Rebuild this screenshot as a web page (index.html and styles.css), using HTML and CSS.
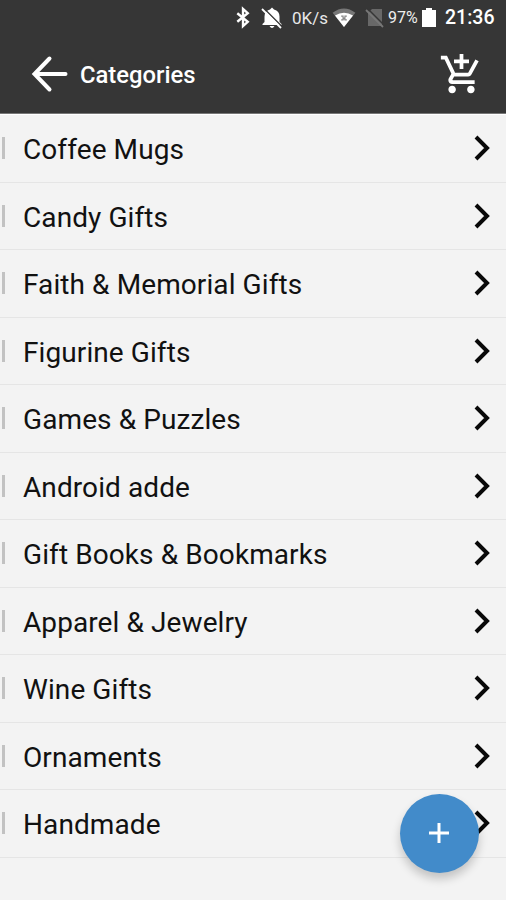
FILE: index.html
```html
<!DOCTYPE html>
<html lang="en">
<head>
<meta charset="utf-8">
<title>Categories</title>
<link rel="stylesheet" href="styles.css">
</head>
<body>
<header class="header">
  <div class="status">
    <svg class="bluetooth" viewBox="0 0 14 20"><path d="M1 5.5 12 14.5 7 19V1l5 4.5L1 14.5"/></svg>
    <svg class="bell" viewBox="0 0 22 22"><path d="M11 0.500L13 2.500Q18.500 4 18.500 9.500V15L20.500 17V18H1.500V17L3.500 15V9.500Q3.500 4 9 2.500zM8.500 19h5q-2.500 4-5 0z"/><path class="cut" d="M3 1.500 21.500 20"/><path class="slash" d="M1 2 20 21"/></svg>
    <span class="speed">0K/s</span>
    <svg class="wifi" viewBox="0 0 24 20"><path class="dim" d="M12 20 0 5Q12-4 24 5z"/><path d="M12 20 2.500 8Q12 2 21.500 8z"/><path class="mark" d="M9 8.500h2v2h2v-2h2M9 12.500h2v-1h2v1h2"/></svg>
    <svg class="sim" viewBox="0 0 20 20"><path d="M7 1h10v17H3V5z"/><path class="cut" d="M2.500 .5 20 18"/><path class="slash" d="M1 2 18 19"/></svg>
    <span class="percent">97%</span>
    <svg class="battery" viewBox="0 0 14 19"><path d="M0 2h4V0h6v2h4v17H0z"/></svg>
    <span class="clock">21:36</span>
  </div>
  <div class="toolbar">
    <svg class="back" viewBox="0 0 36 36"><path d="M18.500 2.500 3.500 18l15 15.500M4 18h30.500"/></svg>
    <h1 class="title">Categories</h1>
    <svg class="cart" viewBox="0 0 24 24"><path d="M11 9h2V6h3V4h-3V1h-2v3H8v2h3v3zm-4 9c-1.100 0-1.990.9-1.990 2S5.900 22 7 22s2-.9 2-2-.9-2-2-2zm10 0c-1.100 0-1.990.9-1.990 2s.89 2 1.990 2 2-.9 2-2-.9-2-2-2zm-9.830-3.250l.03-.12.9-1.630h7.450c.75 0 1.410-.41 1.750-1.030l3.860-7.010L19.420 4h-.01l-1.100 2-2.760 5H8.530l-.13-.27L6.160 6l-.95-2-.94-2H1v2h2l3.600 7.590-1.350 2.450c-.16.28-.25.61-.25.96 0 1.100.9 2 2 2h12v-2H7.420c-.13 0-.25-.11-.25-.25z"/></svg>
  </div>
</header>
<main class="list">
  <div class="row"><span class="label">Coffee Mugs</span><svg class="chevron" viewBox="0 0 16 26"><path d="m2 2 11 11L2 24"/></svg></div>
  <div class="row"><span class="label">Candy Gifts</span><svg class="chevron" viewBox="0 0 16 26"><path d="m2 2 11 11L2 24"/></svg></div>
  <div class="row"><span class="label">Faith &amp; Memorial Gifts</span><svg class="chevron" viewBox="0 0 16 26"><path d="m2 2 11 11L2 24"/></svg></div>
  <div class="row"><span class="label">Figurine Gifts</span><svg class="chevron" viewBox="0 0 16 26"><path d="m2 2 11 11L2 24"/></svg></div>
  <div class="row"><span class="label">Games &amp; Puzzles</span><svg class="chevron" viewBox="0 0 16 26"><path d="m2 2 11 11L2 24"/></svg></div>
  <div class="row"><span class="label">Android adde</span><svg class="chevron" viewBox="0 0 16 26"><path d="m2 2 11 11L2 24"/></svg></div>
  <div class="row"><span class="label">Gift Books &amp; Bookmarks</span><svg class="chevron" viewBox="0 0 16 26"><path d="m2 2 11 11L2 24"/></svg></div>
  <div class="row"><span class="label">Apparel &amp; Jewelry</span><svg class="chevron" viewBox="0 0 16 26"><path d="m2 2 11 11L2 24"/></svg></div>
  <div class="row"><span class="label">Wine Gifts</span><svg class="chevron" viewBox="0 0 16 26"><path d="m2 2 11 11L2 24"/></svg></div>
  <div class="row"><span class="label">Ornaments</span><svg class="chevron" viewBox="0 0 16 26"><path d="m2 2 11 11L2 24"/></svg></div>
  <div class="row"><span class="label">Handmade</span><svg class="chevron" viewBox="0 0 16 26"><path d="m2 2 11 11L2 24"/></svg></div>
</main>
<button class="fab" aria-label="Add"><svg viewBox="0 0 20 20"><path d="M10 0v20M0 10h20"/></svg></button>
</body>
</html>
```
FILE: styles.css
```css
* { box-sizing: border-box; }
body {
  margin: 0;
  height: 900px;
  overflow: hidden;
  position: relative;
  background: #f3f3f3;
  color: #111;
  font-family: Roboto, "Liberation Sans", sans-serif;
}
svg { display: block; flex: none; overflow: visible; }
.header {
  height: 114px;
  background: #363636;
  border-bottom: 1px solid #777;
  color: #fff;
}
.status {
  height: 35px;
  display: flex;
  align-items: center;
  justify-content: flex-end;
  padding-right: 10px;
  white-space: nowrap;
}
.status svg { fill: #fff; }
.status .bluetooth { width: 14px; height: 19px; fill: none; stroke: #fff; stroke-width: 2.5; margin-right: 11px; }
.bell { width: 22px; height: 22px; margin-right: 9px; }
.cut { stroke: #363636; stroke-width: 1.5; }
.slash { stroke: #fff; stroke-width: 1.8; }
.speed { width: 36px; font-size: 17px; color: #e8e8e8; margin-right: 4px; }
.wifi { width: 24px; height: 19px; margin-right: 9px; }
.status .dim { fill: #777; }
.mark { fill: none; stroke: #888; stroke-width: 1.2; }
.status .sim { width: 20px; height: 20px; fill: #686868; margin-right: 3px; }
.sim .slash { stroke: #777; }
.percent { width: 31px; font-size: 16px; color: #eee; margin-right: 3px; }
.battery { width: 14px; height: 19px; margin-right: 9px; }
.clock { width: 51px; font-size: 19.5px; font-weight: 500; }
.toolbar {
  height: 78px;
  display: flex;
  align-items: center;
  padding: 0 22px 0 31px;
}
.back { width: 36px; height: 36px; fill: none; stroke: #fff; stroke-width: 4; stroke-linecap: round; }
.title { margin: 1px 0 0 13px; font-size: 23.8px; font-weight: 500; line-height: 30px; }
.cart { width: 45px; height: 45px; margin-left: auto; fill: #fff; }
.list { border-top: 1px solid #fff; }
.row {
  height: 67.5px;
  display: flex;
  align-items: center;
  border-bottom: 1px solid #e5e5e5;
  padding-right: 16px;
}
.row::before { content: ""; width: 3px; height: 22px; margin-left: 2px; background: #c2c2c2; }
.label { margin: 4px 0 0 18px; font-size: 28px; line-height: 36px; letter-spacing: .09px; white-space: nowrap; }
.chevron { width: 16px; height: 26px; margin-left: auto; fill: none; stroke: #080808; stroke-width: 4; }
.fab {
  position: absolute;
  left: 400px;
  top: 794px;
  width: 79px;
  height: 79px;
  padding: 0 1px 1px 0;
  border: 0;
  border-radius: 50%;
  background: #428bca;
  display: grid;
  place-items: center;
  box-shadow: 0 6px 10px rgba(0, 0, 0, .2);
}
.fab svg { width: 20px; height: 20px; fill: none; stroke: #fff; stroke-width: 3; }
```
